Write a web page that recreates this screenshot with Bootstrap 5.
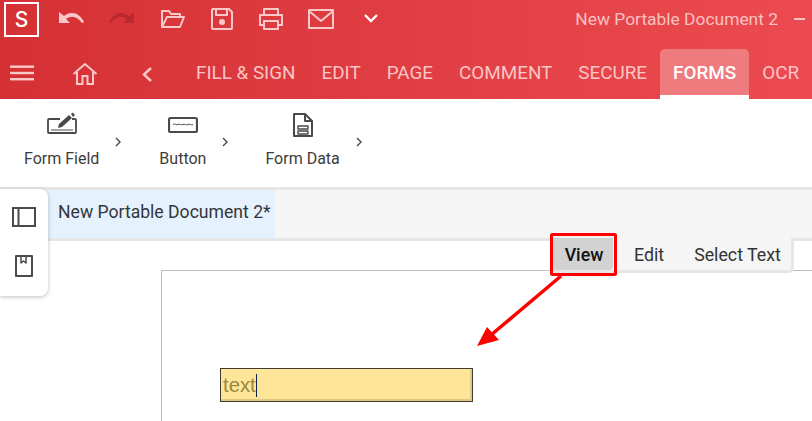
<!DOCTYPE html>
<html lang="en">
<head>
<meta charset="UTF-8">
<title>New Portable Document 2</title>
<link href="https://cdn.jsdelivr.net/npm/bootstrap@5.3.2/dist/css/bootstrap.min.css" rel="stylesheet">
<style>
html, body { height: 421px; overflow: hidden; }
body { font-family: Roboto, "Liberation Sans", sans-serif; background: #fff; position: relative; width: 812px; }
.app-top { height: 99px; background: linear-gradient(90deg, #d53135, #eb4b50); color: #fff; }
.title-row { height: 38px; padding: 0 0 0 4px; }
.logo-box { width: 35px; height: 35px; border: 2px solid #fff; font-family: Inter, sans-serif; font-size: 21px; font-weight: 500; line-height: 1; margin-top: 1px; }
.qa-icons { margin-left: 19px; gap: 22px; }
.qa-icons svg { display: block; }
.doc-title { font-size: 17.4px; color: #f8c0c2; margin-left: auto; white-space: nowrap; }
.min-dash { width: 11px; height: 1.5px; background: #f8c0c2; margin: 0 7px 0 16px; flex: none; }
.tab-row { height: 61px; padding-left: 10px; }
.tab-item { font-size: 18.85px; color: #fbc4c6; height: 50px; margin-top: 11px; padding: 0 13px; line-height: 48px; white-space: nowrap; }
.tab-item.on { background: #ef7b7e; color: #fff; font-weight: 500; border-radius: 5px 5px 0 0; border-bottom: 4px solid #fff; }
.ribbon-strip { height: 88px; border-bottom: 3px solid #e6e6e6; box-sizing: content-box; }
.rib-tool { color: #3c3c3c; font-size: 16px; }
.rib-tool svg { display: block; margin: 0 auto; }
.doc-tabs { height: 51px; background: #f5f5f5; border-bottom: 3px solid #e6e6e6; padding-left: 48px; }
.doc-tab { background: #e5f2fd; width: 227px; padding-left: 10px; font-size: 17.6px; color: #33363a; line-height: 44px; }
.side-tools { position: absolute; left: 0; top: 189px; width: 48px; height: 107px; background: #fff; border-radius: 0 8px 8px 0; box-shadow: 0 1px 4px rgba(0,0,0,.25); z-index: 3; }
.sheet-area { height: 180px; padding: 29px 0 0 161px; }
.sheet-page { height: 160px; border: 1px solid #bdbdbd; border-right: 0; border-bottom: 0; padding: 97px 0 0 58px; }
.field-box { width: 253px; height: 34px; background: #fee698; border: 1px solid #3f3d33; box-shadow: inset -2px -2px 0 #e0c985; font-family: "Liberation Sans", sans-serif; font-size: 20.3px; color: #9b8741; line-height: 32px; padding-left: 2px; }
.caret-bar { display: inline-block; width: 1px; height: 23px; background: #10204a; vertical-align: -5px; }
.mode-bar { position: absolute; left: 551px; top: 238px; height: 35px; width: 243px; background: #f5f5f5; border-right: 3px solid #e6e6e6; border-bottom: 3px solid #e6e6e6; border-radius: 0 0 5px 5px; font-size: 17.8px; color: #333; z-index: 2; }
.mode-btn { line-height: 33px; white-space: nowrap; }
.mode-btn.on { background: #d2d2d2; color: #111; width: 62px; padding-left: 4px; text-align: center; border-radius: 0 0 4px 4px; font-weight: 500; }
.red-mark { position: absolute; left: 0; top: 0; z-index: 4; pointer-events: none; }
</style>
</head>
<body>
<div class="app-top">
  <div class="title-row d-flex align-items-center">
    <div class="logo-box d-flex align-items-center justify-content-center">S</div>
    <div class="qa-icons d-flex align-items-center">
      <svg width="28" height="22" viewBox="0 0 28 22" fill="#f9c9ca"><path d="M1 5v11h11l-4-4c5-4 11-3 16 4l2-1C22 6 13 3 6 9z" transform="translate(0 -1)"/></svg>
      <svg width="28" height="22" viewBox="0 0 28 22" fill="#b92a2e" style="margin-left:-1px"><path d="M27 5v11H16l4-4c-5-4-11-3-16 4l-2-1C6 6 15 3 22 9z" transform="translate(0 -1)"/></svg>
      <svg width="26" height="22" viewBox="0 0 26 22" fill="none" stroke="#f9c9ca" stroke-width="2" stroke-linejoin="round" style="margin-left:3px"><path d="M2 19V3h7l2 3h9v3M2 19h18l4-10H7z"/></svg>
      <svg width="24" height="24" viewBox="0 0 24 24" fill="none" stroke="#f9c9ca" stroke-width="2" stroke-linejoin="round" style="margin-left:2px"><path d="M2 3a1 1 0 0 1 1-1h16l3 3v16a1 1 0 0 1-1 1H3a1 1 0 0 1-1-1z"/><path d="M6 2v6h11V2"/><circle cx="12" cy="15" r="3" fill="#f9c9ca" stroke="none"/></svg>
      <svg width="26" height="24" viewBox="0 0 26 24" fill="none" stroke="#f9c9ca" stroke-width="2" stroke-linejoin="round" style="margin-left:2px"><path d="M6 8V2h14v6M6 18H2V8h22v10h-4"/><path d="M6 14h14v8H6z"/></svg>
      <svg width="26" height="20" viewBox="0 0 26 20" fill="none" stroke="#f9c9ca" stroke-width="2" stroke-linejoin="round" style="margin-left:2px"><path d="M1 1h24v18H1z"/><path d="M1 2l12 10L25 2"/></svg>
      <svg width="14" height="10" viewBox="0 0 14 10" fill="none" stroke="#fff" stroke-width="2.4" style="margin-left:8px"><path d="M1 1l6 6 6-6"/></svg>
    </div>
    <div class="doc-title">New Portable Document 2</div>
    <div class="min-dash"></div>
  </div>
  <div class="tab-row d-flex align-items-start">
    <svg width="24" height="16" viewBox="0 0 24 16" fill="#f9c9ca" style="margin-top:27px"><rect width="24" height="2.4" y="0.5"/><rect width="24" height="2.4" y="6.8"/><rect width="24" height="2.4" y="13"/></svg>
    <svg width="26" height="23" viewBox="0 0 26 23" fill="none" stroke="#f9c9ca" stroke-width="2" style="margin:24px 0 0 38px"><path d="M1.5 12L13 2l11.500 10M5 10v12h5.500v-8h5v8H21V10"/></svg>
    <svg width="10" height="15" viewBox="0 0 10 15" fill="none" stroke="#f9c9ca" stroke-width="2.400" style="margin:29px 0 0 44px"><path d="M9 1L2 7.500 9 14"/></svg>
    <div class="d-flex" style="margin-left:31px">
      <div class="tab-item">FILL &amp; SIGN</div>
      <div class="tab-item">EDIT</div>
      <div class="tab-item">PAGE</div>
      <div class="tab-item">COMMENT</div>
      <div class="tab-item">SECURE</div>
      <div class="tab-item on">FORMS</div>
      <div class="tab-item">OCR</div>
    </div>
  </div>
</div>

<div class="ribbon-strip d-flex align-items-start">
  <div class="rib-tool text-center" style="margin:13px 0 0 24px">
    <svg width="30" height="24" viewBox="0 0 30 24" fill="none" stroke="#4a4a4a" stroke-width="1.800"><path d="M13 7H2a1 1 0 0 0-1 1v12a1 1 0 0 0 1 1h26a1 1 0 0 0 1-1V8a1 1 0 0 0-1-1h-3"/><path d="M4 18h22" stroke-width="1"/><path d="M11 16l1-4 10-9 3 3-10 9z" fill="#4a4a4a" stroke="none"/><path d="M24 2l2-1.500 2 2.500-2 2z" fill="#4a4a4a" stroke="none"/></svg>
    <div style="margin-top:11px">Form Field</div>
  </div>
  <svg width="7" height="10" viewBox="0 0 7 10" fill="none" stroke="#4a4a4a" stroke-width="1.400" style="margin:38px 0 0 16px"><path d="M1 1l4 4-4 4"/></svg>
  <div class="rib-tool text-center" style="margin:13px 0 0 37px">
    <svg width="30" height="24" viewBox="0 0 30 24" fill="none" stroke="#4a4a4a" stroke-width="2.200"><rect x="1" y="6" width="28" height="14" rx="1.500"/><path d="M5 12.500c2-1.500 3 1 5 0s3 1 5 0 3 1 5 0 3 1 5 0" stroke-width="1"/></svg>
    <div style="margin-top:11px">Button</div>
  </div>
  <svg width="7" height="10" viewBox="0 0 7 10" fill="none" stroke="#4a4a4a" stroke-width="1.400" style="margin:38px 0 0 16px"><path d="M1 1l4 4-4 4"/></svg>
  <div class="rib-tool text-center" style="margin:13px 0 0 36px">
    <svg width="22" height="26" viewBox="0 0 22 26" fill="none" stroke="#4a4a4a" stroke-width="2" stroke-linejoin="round"><path d="M2 2h11l7 7v15H2z"/><path d="M13 2v7h7"/><path d="M6 14h10v3H6zM6 19h10v3H6z" stroke-width="1.400"/></svg>
    <div style="margin-top:9px">Form Data</div>
  </div>
  <svg width="7" height="10" viewBox="0 0 7 10" fill="none" stroke="#4a4a4a" stroke-width="1.400" style="margin:38px 0 0 16px"><path d="M1 1l4 4-4 4"/></svg>
</div>

<div class="doc-tabs d-flex">
  <div class="doc-tab">New Portable Document 2*</div>
</div>

<div class="side-tools d-flex flex-column align-items-center">
  <svg width="24" height="20" viewBox="0 0 24 20" fill="none" stroke="#4a4a4a" stroke-width="2" style="margin-top:18px"><path d="M1 1h22v18H1zM6.500 1v18"/></svg>
  <svg width="18" height="22" viewBox="0 0 18 22" fill="none" stroke="#4a4a4a" stroke-width="2" stroke-linejoin="round" style="margin-top:28px"><path d="M1 1h16v20H1z"/><path d="M6 1v7l2.500-2L11 8V1" stroke-width="1.500"/></svg>
</div>

<div class="sheet-area">
  <div class="sheet-page">
    <div class="field-box">text<span class="caret-bar"></span></div>
  </div>
</div>

<div class="mode-bar d-flex">
  <div class="mode-btn on">View</div>
  <div class="mode-btn" style="margin-left:21px">Edit</div>
  <div class="mode-btn" style="margin-left:30px">Select Text</div>
</div>

<svg class="red-mark" width="812" height="421" viewBox="0 0 812 421">
  <rect x="551.500" y="234.500" width="64" height="40" rx="1" fill="none" stroke="#f00" stroke-width="3"/>
  <path d="M561 276L491 335" stroke="#f00" stroke-width="3.500" fill="none"/>
  <path d="M477 346L487 327 499 340z" fill="#f00"/>
</svg>

<script src="https://cdn.jsdelivr.net/npm/bootstrap@5.3.2/dist/js/bootstrap.bundle.min.js"></script>
</body>
</html>
